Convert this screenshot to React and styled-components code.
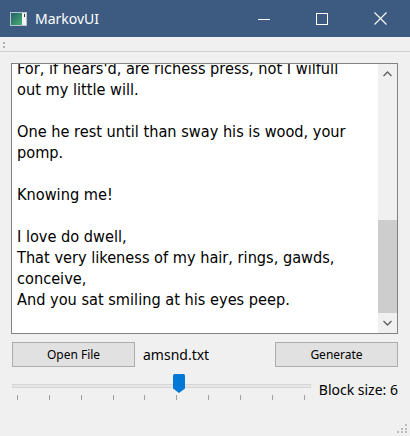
import React from "react";
import styled, { createGlobalStyle } from "styled-components";

const GlobalStyle = createGlobalStyle`
  html, body { margin: 0; padding: 0; background: #f0f0f0; }
  body { width: 410px; height: 436px; overflow: hidden; }
  * { box-sizing: border-box; }
`;

const Window = styled.div`
  position: relative;
  width: 410px;
  height: 436px;
  display: flex;
  flex-direction: column;
  background: #f0f0f0;
  font-family: "Noto Sans", "Open Sans", sans-serif;
  color: #000;
`;

const TitleBar = styled.div`
  height: 37px;
  flex: none;
  display: flex;
  align-items: center;
  background: #3d5b81;
  color: #fff;
  padding-left: 10px;
  padding-right: 1px;
`;

const TitleText = styled.span`
  margin-left: 8px;
  font-size: 14px;
  line-height: 20px;
  font-family: "Noto Sans", sans-serif;
`;

const Controls = styled.div`
  margin-left: auto;
  display: flex;
  height: 37px;
`;

const ControlButton = styled.div`
  width: 58px;
  height: 37px;
  display: flex;
  align-items: center;
  justify-content: center;
`;

const ToolStrip = styled.div`
  height: 15px;
  flex: none;
  border-bottom: 1px solid #cfcfcf;
  display: flex;
  align-items: center;
  padding-left: 3px;
`;

const Main = styled.div`
  flex: 1;
  display: flex;
  flex-direction: column;
  padding: 11px 12px 0 11px;
`;

const Editor = styled.div`
  height: 271px;
  display: flex;
  background: #fff;
  border: 1px solid #828282;
`;

const TextPane = styled.div`
  flex: 1;
  overflow: hidden;
  padding-left: 5px;
  font-family: "DejaVu Sans Condensed", "DejaVu Sans", sans-serif;
  font-size: 16.2px;
  line-height: 21px;
`;

const Lines = styled.div`
  margin-top: -6px;
`;

const Line = styled.div`
  white-space: pre;
  height: 21px;
`;

const ScrollBar = styled.div`
  width: 19px;
  flex: none;
  display: flex;
  flex-direction: column;
  background: #f0f0f0;
`;

const ArrowBox = styled.div`
  height: 20px;
  flex: none;
  display: flex;
  align-items: center;
  justify-content: center;
`;

const Track = styled.div`
  flex: 1;
  display: flex;
  flex-direction: column;
  justify-content: flex-end;
`;

const Thumb = styled.div`
  height: 93px;
  background: #cdcdcd;
`;

const ButtonRow = styled.div`
  margin-top: 8px;
  height: 25px;
  display: flex;
  align-items: center;
  padding-left: 1px;
`;

const PushButton = styled.button`
  width: 123px;
  height: 25px;
  margin: 0;
  padding: 0;
  background: #e1e1e1;
  border: 1px solid #adadad;
  font-family: "Noto Sans", sans-serif;
  font-size: 12px;
  color: #000;
  margin-left: ${(p) => (p.$push ? "auto" : "0")};
`;

const Label = styled.span`
  font-family: "Noto Sans", sans-serif;
  font-size: 14px;
  line-height: 19px;
  margin-left: ${(p) => p.$gap || 0}px;
  margin-top: ${(p) => p.$top || 0}px;
  white-space: nowrap;
`;

const SliderRow = styled.div`
  margin-top: 7px;
  height: 27px;
  display: flex;
  align-items: flex-start;
  padding-left: 1px;
`;

const Slider = styled.div`
  position: relative;
  width: 300px;
  height: 27px;
  display: flex;
  flex-direction: column;
`;

const Groove = styled.div`
  margin-top: 10px;
  height: 4px;
  background: #e7e7e7;
  border: 1px solid #d6d6d6;
`;

const Ticks = styled.div`
  margin-top: 7px;
  display: flex;
  justify-content: space-between;
  padding: 0 6px 0 5px;
`;

const Tick = styled.div`
  width: 1px;
  height: 5px;
  background: #a0a0a0;
`;

const SliderThumb = styled.svg`
  position: absolute;
  top: 0;
`;

const Grip = styled.svg`
  position: absolute;
  right: 1px;
  bottom: 1px;
`;

const lines = [
  "For, if hears'd, are richess press, not I wilfull",
  "out my little will.",
  "",
  "One he rest until than sway his is wood, your",
  "pomp.",
  "",
  "Knowing me!",
  "",
  "I love do dwell,",
  "That very likeness of my hair, rings, gawds,",
  "conceive,",
  "And you sat smiling at his eyes peep.",
];

function AppIcon() {
  return (
    <svg width="17" height="14" viewBox="0 0 17 14">
      <defs>
        <linearGradient id="ig" x1="0" y1="0" x2="1" y2="1">
          <stop offset="0" stopColor="#1f5f6a" />
          <stop offset="1" stopColor="#4cb072" />
        </linearGradient>
      </defs>
      <rect x="0.5" y="0.5" width="16" height="13" fill="#f4f4f4" stroke="#b8c4cf" />
      <rect x="1" y="1" width="11" height="12" fill="url(#ig)" />
      <rect x="14" y="2" width="1" height="3" fill="#333" />
    </svg>
  );
}

export default function App() {
  const min = 1;
  const max = 10;
  const value = 6;
  const pct = (value - min) / (max - min);
  const thumbLeft = 5 + pct * 289 - 5;

  return (
    <>
      <GlobalStyle />
      <Window>
        <TitleBar>
          <AppIcon />
          <TitleText>MarkovUI</TitleText>
          <Controls>
            <ControlButton>
              <svg width="12" height="12" viewBox="0 0 12 12">
                <rect x="0" y="6" width="12" height="1" fill="#fff" />
              </svg>
            </ControlButton>
            <ControlButton>
              <svg width="12" height="12" viewBox="0 0 12 12">
                <rect x="0.5" y="0.5" width="11" height="11" fill="none" stroke="#fff" />
              </svg>
            </ControlButton>
            <ControlButton>
              <svg width="13" height="13" viewBox="0 0 13 13">
                <path d="M0.5 0.5 L12.5 12.5 M12.5 0.5 L0.5 12.5" stroke="#fff" strokeWidth="1.1" />
              </svg>
            </ControlButton>
          </Controls>
        </TitleBar>
        <ToolStrip>
          <svg width="3" height="9" viewBox="0 0 3 9">
            <rect x="0" y="2" width="2" height="2" fill="#b0b0b0" />
            <rect x="0" y="6" width="2" height="2" fill="#b0b0b0" />
          </svg>
        </ToolStrip>
        <Main>
          <Editor>
            <TextPane>
              <Lines>
                {lines.map((l, i) => (
                  <Line key={i}>{l}</Line>
                ))}
              </Lines>
            </TextPane>
            <ScrollBar>
              <ArrowBox>
                <svg width="9" height="6" viewBox="0 0 9 6">
                  <polyline points="0.5,5 4.5,1 8.5,5" fill="none" stroke="#606060" strokeWidth="1.3" />
                </svg>
              </ArrowBox>
              <Track>
                <Thumb />
              </Track>
              <ArrowBox>
                <svg width="9" height="6" viewBox="0 0 9 6">
                  <polyline points="0.5,1 4.5,5 8.5,1" fill="none" stroke="#606060" strokeWidth="1.3" />
                </svg>
              </ArrowBox>
            </ScrollBar>
          </Editor>
          <ButtonRow>
            <PushButton>Open File</PushButton>
            <Label $gap={8}>amsnd.txt</Label>
            <PushButton $push>Generate</PushButton>
          </ButtonRow>
          <SliderRow>
            <Slider>
              <Groove />
              <Ticks>
                {Array.from({ length: 10 }).map((_, i) => (
                  <Tick key={i} />
                ))}
              </Ticks>
              <SliderThumb
                width="12"
                height="19"
                viewBox="0 0 12 19"
                style={{ left: thumbLeft + "px" }}
              >
                <path d="M0 1.5 Q0 0 1.5 0 H10.5 Q12 0 12 1.5 V14.5 L6 19 L0 14.5 Z" fill="#0078d7" />
              </SliderThumb>
            </Slider>
            <Label $gap={8} $top={6}>Block size: 6</Label>
          </SliderRow>
        </Main>
        <Grip width="12" height="12" viewBox="0 0 12 12">
          <rect x="8" y="1" width="2" height="2" fill="#bcbcbc" />
          <rect x="4" y="5" width="2" height="2" fill="#bcbcbc" />
          <rect x="8" y="5" width="2" height="2" fill="#bcbcbc" />
          <rect x="0" y="8" width="2" height="2" fill="#bcbcbc" />
          <rect x="4" y="8" width="2" height="2" fill="#bcbcbc" />
          <rect x="8" y="8" width="2" height="2" fill="#bcbcbc" />
        </Grip>
      </Window>
    </>
  );
}
